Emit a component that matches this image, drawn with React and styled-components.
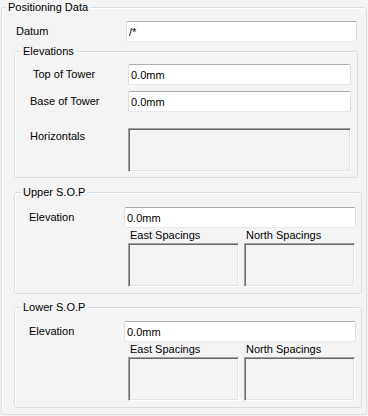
import React from 'react';
import styled, { createGlobalStyle } from 'styled-components';

const GlobalStyle = createGlobalStyle`
  html, body {
    margin: 0;
    background: #f4f4f4;
  }
  body {
    font-family: "Liberation Sans", Arial, sans-serif;
    font-size: 11px;
    color: #000;
  }
`;

const Group = styled.fieldset`
  box-sizing: border-box;
  width: ${(p) => p.$width}px;
  margin: ${(p) => p.$top}px 0 0 ${(p) => p.$left}px;
  padding: 0 0 ${(p) => p.$bottom}px 0;
  min-width: 0;
  border: 1px solid #d5dfe5;
  border-radius: 3px;
  box-shadow: inset 1px 1px 0 #fff;
`;

const Title = styled.legend`
  margin-left: ${(p) => p.$indent}px;
  padding: 0 2px;
  line-height: 15px;
  background: #f4f4f4;
`;

const Row = styled.div`
  display: flex;
  align-items: ${(p) => (p.$top ? 'flex-start' : 'center')};
  margin: ${(p) => p.$gap}px 0 0 ${(p) => p.$left}px;
`;

const Label = styled.div`
  box-sizing: border-box;
  flex: none;
  width: ${(p) => p.$width}px;
  padding-left: ${(p) => p.$indent || 0}px;
  margin-top: ${(p) => p.$drop || 0}px;
  line-height: 13px;
  white-space: nowrap;
`;

const TextBox = styled.input`
  box-sizing: border-box;
  flex: none;
  width: ${(p) => p.$width}px;
  height: 21px;
  margin: 0;
  padding: 0 2px;
  border: 1px solid #dbdfe6;
  border-top-color: #abadb3;
  border-bottom-color: #e3e9ef;
  border-radius: 2px;
  background: #fff;
  font: inherit;
  color: #000;
  outline: none;
`;

const ListBox = styled.div`
  box-sizing: border-box;
  width: ${(p) => p.$width}px;
  height: 44px;
  border: 1px solid #fff;
  border-top-color: #a0a0a0;
  border-left-color: #a0a0a0;
  box-shadow: inset 1px 1px 0 #696969, inset -1px -1px 0 #e3e3e3;
  background: #f4f4f4;
`;

const Spacings = styled.div`
  display: grid;
  grid-template-columns: 111px 111px;
  column-gap: 5px;
  margin: 1px 0 0 113px;
`;

const Column = styled.div`
  display: flex;
  flex-direction: column;
  gap: 1px;
`;

const ColumnLabel = styled.div`
  padding-left: 2px;
  line-height: 13px;
  white-space: nowrap;
`;

const SopGroup = ({ title, top, elevation }) => (
  <Group $width={348} $top={top} $left={12} $bottom={6}>
    <Title $indent={6}>{title}</Title>
    <Row $gap={top === 7 ? 7 : 6} $left={14}>
      <Label $width={95}>Elevation</Label>
      <TextBox $width={232} value={elevation} readOnly />
    </Row>
    <Spacings>
      <Column>
        <ColumnLabel>East Spacings</ColumnLabel>
        <ListBox $width={111} />
      </Column>
      <Column>
        <ColumnLabel>North Spacings</ColumnLabel>
        <ListBox $width={111} />
      </Column>
    </Spacings>
  </Group>
);

const App = () => (
  <>
    <GlobalStyle />
    <Group $width={366} $top={0} $left={1} $bottom={6}>
      <Title $indent={4}>Positioning Data</Title>
      <Row $gap={6} $left={14}>
        <Label $width={110}>Datum</Label>
        <TextBox $width={231} value="/*" readOnly />
      </Row>

      <Group $width={344} $top={2} $left={12} $bottom={5}>
        <Title $indent={6}>Elevations</Title>
        <Row $gap={5} $left={15}>
          <Label $width={98} $indent={3}>Top of Tower</Label>
          <TextBox $width={223} value="0.0mm" readOnly />
        </Row>
        <Row $gap={6} $left={15}>
          <Label $width={98}>Base of Tower</Label>
          <TextBox $width={223} value="0.0mm" readOnly />
        </Row>
        <Row $gap={16} $left={15} $top>
          <Label $width={98} $drop={2}>Horizontals</Label>
          <ListBox $width={223} />
        </Row>
      </Group>

      <SopGroup title="Upper S.O.P" top={7} elevation="0.0mm" />
      <SopGroup title="Lower S.O.P" top={6} elevation="0.0mm" />
    </Group>
  </>
);

export default App;
